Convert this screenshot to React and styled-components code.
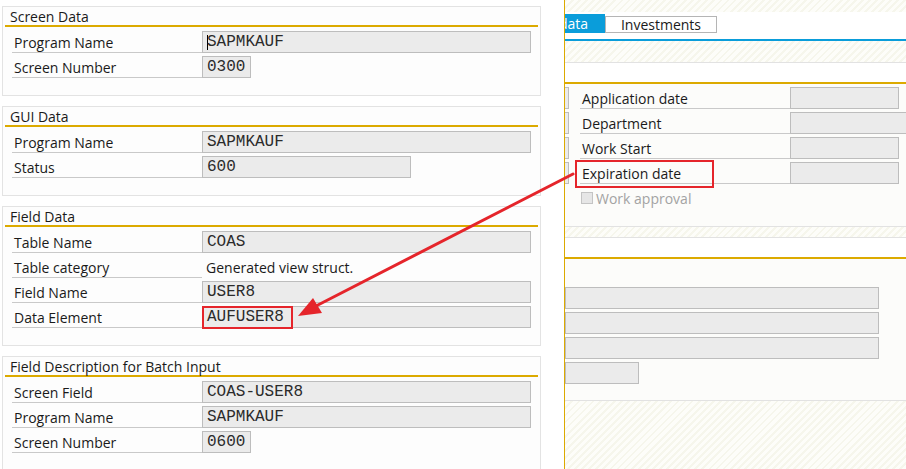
import styled, { createGlobalStyle } from 'styled-components'

const GlobalStyle = createGlobalStyle`
	html, body {
		margin: 0;
		padding: 0;
		background: #ffffff;
		overflow: hidden;
	}
	* {
		box-sizing: border-box;
	}
`

const SANS = `'Open Sans', 'Noto Sans', sans-serif`
const MONO = `'Liberation Mono', 'Courier New', monospace`
const GOLD = '#dcaa00'
const RED = '#e5252b'

const hatch = `
	background-color: #fdfdf9;
	background-image: repeating-linear-gradient(
		-45deg,
		#fdfdf9 0px,
		#fdfdf9 3px,
		#f6f6ec 3px,
		#f6f6ec 5px
	);
`

const Screen = styled.div`
	position: relative;
	display: flex;
	width: 906px;
	height: 469px;
	overflow: hidden;
	font-family: ${SANS};
	font-size: 14px;
	color: #1a1a1a;
`

const LeftPane = styled.div`
	width: 564px;
	flex-shrink: 0;
	display: flex;
	flex-direction: column;
	gap: 10px;
	padding: 6px 0 0 2px;
`

const GroupBox = styled.div`
	width: 539px;
	flex-shrink: 0;
	border: 1px solid #e3e3e3;
	background: #fdfdfd;
	padding-bottom: 17px;
`

const GroupTitle = styled.div`
	height: 18px;
	line-height: 19px;
	padding-left: 7px;
	white-space: nowrap;
`

const GoldRule = styled.div`
	height: 2px;
	margin: 0 2px;
	background: ${GOLD};
`

const Rows = styled.div`
	display: flex;
	flex-direction: column;
	gap: 3px;
	margin-top: 4px;
	padding-left: 9px;
`

const Row = styled.div`
	display: flex;
	height: 22px;
`

const Label = styled.div`
	position: relative;
	width: ${({ $w }) => $w || 190}px;
	flex-shrink: 0;
	display: flex;
	align-items: center;
	padding: 1px 0 0 2px;
	border-bottom: 1px solid #c9c9c9;
	white-space: nowrap;
`

const Field = styled.div`
	width: ${({ $w }) => $w}px;
	flex-shrink: 0;
	height: 22px;
	display: flex;
	align-items: center;
	padding-left: 4px;
	border: 1px solid #bdbdbd;
	background: #ebebeb;
	font-family: ${MONO};
	font-size: 16px;
	color: #2b2b2b;
	white-space: nowrap;
`

const PlainValue = styled.div`
	display: flex;
	align-items: center;
	padding: 1px 0 0 4px;
	white-space: nowrap;
`

const Caret = styled.span`
	display: inline-block;
	width: 1px;
	height: 15px;
	margin-right: -1px;
	background: #000;
`

const Marked = styled.span`
	display: inline-flex;
	align-items: center;
	height: 23px;
	margin: 0 0 0 -5px;
	padding: 0 7px 0 3px;
	border: 2px solid ${RED};
`

const LabelMark = styled.span`
	position: absolute;
	left: -5px;
	top: -2px;
	width: 139px;
	height: 28px;
	border: 2px solid ${RED};
`

/* right-hand SAP screen behind the popup */

const RightPane = styled.div`
	flex: 1;
	display: flex;
	flex-direction: column;
	border-left: 1px solid ${GOLD};
	overflow: hidden;
	min-width: 0;
`

const Hatch = styled.div`
	height: ${({ $h }) => ($h ? `${$h}px` : 'auto')};
	flex: ${({ $h }) => ($h ? 'none' : '1')};
	${hatch}
	border-bottom: ${({ $line }) => ($line ? '1px solid #e2e2e2' : 'none')};
`

const TabStrip = styled.div`
	height: 29px;
	flex-shrink: 0;
	display: flex;
	align-items: flex-end;
	padding-bottom: 6px;
	background: #fff;
	border-bottom: 2px solid #0a9dda;
`

const Tab = styled.div`
	height: ${({ $active }) => ($active ? 19 : 17)}px;
	width: ${({ $w }) => $w}px;
	flex-shrink: 0;
	display: flex;
	align-items: center;
	justify-content: ${({ $active }) => ($active ? 'flex-start' : 'center')};
	overflow: hidden;
	white-space: nowrap;
	background: ${({ $active }) => ($active ? '#0a9dda' : '#fff')};
	color: ${({ $active }) => ($active ? '#fff' : '#1a1a1a')};
	border: ${({ $active }) => ($active ? 'none' : '1px solid #b5b5b5')};
	text-indent: ${({ $indent }) => $indent || 0}px;
`

const Spacer = styled.div`
	height: ${({ $h }) => $h}px;
	background: #fff;
	flex-shrink: 0;
`

const Panel = styled.div`
	flex-shrink: 0;
	display: flex;
	flex-direction: column;
	gap: 3px;
	border-top: 2px solid ${GOLD};
	border-bottom: 1px solid #e2e2e2;
	background: #fcfcfa;
	padding: ${({ $pad }) => $pad};
`

const PanelRow = styled.div`
	display: flex;
	height: 22px;
`

const Stub = styled.div`
	width: 4px;
	flex-shrink: 0;
	border: 1px solid #bdbdbd;
	border-left: none;
	background: #ebebeb;
	margin-right: 11px;
`

const CheckRow = styled.div`
	display: flex;
	align-items: center;
	gap: 3px;
	height: 22px;
	margin-top: 0;
	padding-left: 16px;
	color: #a3a3a3;
`

const Box = styled.span`
	width: 12px;
	height: 12px;
	border: 1px solid #c4c4c4;
	background: #e6e6e6;
`

const Overlay = styled.svg`
	position: absolute;
	inset: 0;
	pointer-events: none;
`

const App = () => {
	return (
		<>
			<GlobalStyle />
			<Screen>
				<LeftPane>
					<GroupBox>
						<GroupTitle>Screen Data</GroupTitle>
						<GoldRule />
						<Rows>
							<Row>
								<Label>Program Name</Label>
								<Field $w={329}>
									<Caret />
									SAPMKAUF
								</Field>
							</Row>
							<Row>
								<Label>Screen Number</Label>
								<Field $w={49}>0300</Field>
							</Row>
						</Rows>
					</GroupBox>

					<GroupBox>
						<GroupTitle>GUI Data</GroupTitle>
						<GoldRule />
						<Rows>
							<Row>
								<Label>Program Name</Label>
								<Field $w={329}>SAPMKAUF</Field>
							</Row>
							<Row>
								<Label>Status</Label>
								<Field $w={209}>600</Field>
							</Row>
						</Rows>
					</GroupBox>

					<GroupBox>
						<GroupTitle>Field Data</GroupTitle>
						<GoldRule />
						<Rows>
							<Row>
								<Label>Table Name</Label>
								<Field $w={329}>COAS</Field>
							</Row>
							<Row>
								<Label>Table category</Label>
								<PlainValue>Generated view struct.</PlainValue>
							</Row>
							<Row>
								<Label>Field Name</Label>
								<Field $w={329}>USER8</Field>
							</Row>
							<Row>
								<Label>Data Element</Label>
								<Field $w={329}>
									<Marked>AUFUSER8</Marked>
								</Field>
							</Row>
						</Rows>
					</GroupBox>

					<GroupBox>
						<GroupTitle>Field Description for Batch Input</GroupTitle>
						<GoldRule />
						<Rows>
							<Row>
								<Label>Screen Field</Label>
								<Field $w={329}>COAS-USER8</Field>
							</Row>
							<Row>
								<Label>Program Name</Label>
								<Field $w={329}>SAPMKAUF</Field>
							</Row>
							<Row>
								<Label>Screen Number</Label>
								<Field $w={49}>0600</Field>
							</Row>
						</Rows>
					</GroupBox>
				</LeftPane>

				<RightPane>
					<Hatch $h={12} />
					<TabStrip>
						<Tab $active $w={40} $indent={-6}>
							data
						</Tab>
						<Tab $w={112}>Investments</Tab>
					</TabStrip>
					<Hatch $h={22} $line />
					<Spacer $h={19} />
					<Panel $pad='3px 0 17px 0'>
						<PanelRow>
							<Stub />
							<Label $w={210}>Application date</Label>
							<Field $w={109} />
						</PanelRow>
						<PanelRow>
							<Stub />
							<Label $w={210}>Department</Label>
							<Field $w={200} />
						</PanelRow>
						<PanelRow>
							<Stub />
							<Label $w={210}>Work Start</Label>
							<Field $w={109} />
						</PanelRow>
						<PanelRow>
							<Stub />
							<Label $w={210}>
								Expiration date
								<LabelMark />
							</Label>
							<Field $w={109} />
						</PanelRow>
						<CheckRow>
							<Box />
							Work approval
						</CheckRow>
					</Panel>
					<Hatch $h={11} $line />
					<Spacer $h={19} />
					<Panel $pad='28px 0 16px 0'>
						<Field $w={314} />
						<Field $w={314} />
						<Field $w={314} />
						<Field $w={74} />
					</Panel>
					<Hatch />
				</RightPane>

				<Overlay width='906' height='469' viewBox='0 0 906 469'>
					<line x1='573' y1='174' x2='316' y2='306' stroke={RED} strokeWidth='3' strokeLinecap='round' />
					<polygon points='298,316 322,313 313,298' fill={RED} />
				</Overlay>
			</Screen>
		</>
	)
}

export default App
